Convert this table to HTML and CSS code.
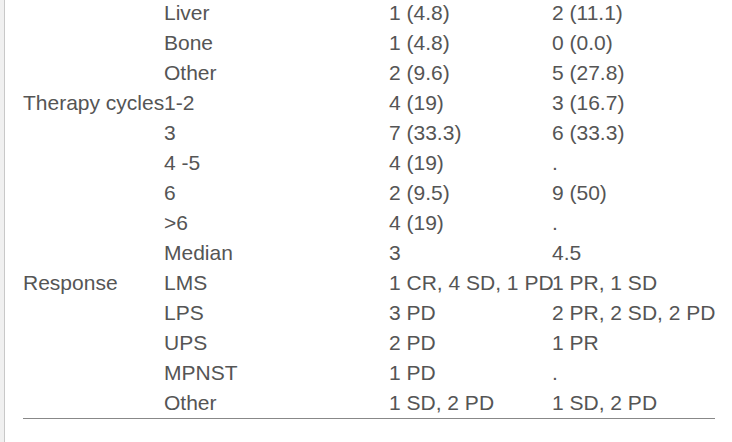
FILE: index.html
```html
<!DOCTYPE html>
<html>
<head>
<meta charset="utf-8">
<link rel="stylesheet" href="styles.css">
</head>
<body>
<div class="page">
  <div class="rail"></div>
  <div class="content">
    <table class="data">
      <colgroup><col class="c1"><col class="c2"><col class="c3"><col class="c4"></colgroup>
      <tbody>
        <tr><td></td><td>Liver</td><td>1 (4.8)</td><td>2 (11.1)</td></tr>
        <tr><td></td><td>Bone</td><td>1 (4.8)</td><td>0 (0.0)</td></tr>
        <tr><td></td><td>Other</td><td>2 (9.6)</td><td>5 (27.8)</td></tr>
        <tr><td>Therapy cycles</td><td>1-2</td><td>4 (19)</td><td>3 (16.7)</td></tr>
        <tr><td></td><td>3</td><td>7 (33.3)</td><td>6 (33.3)</td></tr>
        <tr><td></td><td>4 -5</td><td>4 (19)</td><td>.</td></tr>
        <tr><td></td><td>6</td><td>2 (9.5)</td><td>9 (50)</td></tr>
        <tr><td></td><td>&gt;6</td><td>4 (19)</td><td>.</td></tr>
        <tr><td></td><td>Median</td><td>3</td><td>4.5</td></tr>
        <tr><td>Response</td><td>LMS</td><td>1 CR, 4 SD, 1 PD</td><td>1 PR, 1 SD</td></tr>
        <tr><td></td><td>LPS</td><td>3 PD</td><td>2 PR, 2 SD, 2 PD</td></tr>
        <tr><td></td><td>UPS</td><td>2 PD</td><td>1 PR</td></tr>
        <tr><td></td><td>MPNST</td><td>1 PD</td><td>.</td></tr>
        <tr class="last"><td></td><td>Other</td><td>1 SD, 2 PD</td><td>1 SD, 2 PD</td></tr>
      </tbody>
    </table>
  </div>
</div>
</body>
</html>
```

FILE: styles.css
```css
html, body {
  margin: 0;
  padding: 0;
  background: #fff;
}
.page {
  display: flex;
  height: 442px;
  overflow: hidden;
}
.rail {
  width: 4px;
  flex: none;
  background: #f0f0f0;
  border-right: 1px solid #c8c8c8;
}
.content {
  padding-left: 18px;
  margin-top: -2px;
}
.data {
  border-collapse: collapse;
  table-layout: fixed;
  width: 692px;
  font-family: "Liberation Sans", Arial, sans-serif;
  font-size: 21px;
  line-height: 24px;
  color: #555;
  border-bottom: 1px solid #888;
}
.c1 { width: 141px; }
.c2 { width: 225px; }
.c3 { width: 163px; }
.c4 { width: 163px; }
.data td {
  height: 30px;
  padding: 0;
  white-space: nowrap;
  vertical-align: middle;
  overflow: visible;
}
```
